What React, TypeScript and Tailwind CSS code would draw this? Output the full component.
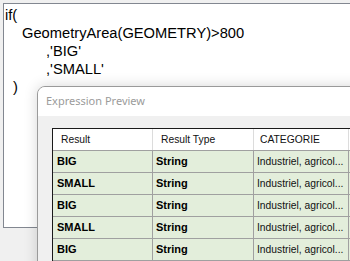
import React from "react";

const rows = [
  { r: "BIG", t: "String", c: "Industriel, agricol..." },
  { r: "SMALL", t: "String", c: "Industriel, agricol..." },
  { r: "BIG", t: "String", c: "Industriel, agricol..." },
  { r: "SMALL", t: "String", c: "Industriel, agricol..." },
  { r: "BIG", t: "String", c: "Industriel, agricol..." },
];

export default function App() {
  return (
    <div
      className="relative w-[350px] h-[261px] overflow-hidden bg-[#f0f0f0]"
      style={{ fontFamily: '"Liberation Sans", Arial, sans-serif' }}
    >
      {/* expression editor */}
      <div className="mt-[3px] ml-[3px] w-[400px] h-[225px] border border-r-0 border-[#828790] bg-white pt-[2px] pl-[1px] text-[14.7px] leading-[18px] text-black">
        <div className="whitespace-pre">if(</div>
        <div className="whitespace-pre pl-[17px]">GeometryArea(GEOMETRY)&gt;800</div>
        <div className="whitespace-pre pl-[41px]">,'BIG'</div>
        <div className="whitespace-pre pl-[41px]">,'SMALL'</div>
        <div className="whitespace-pre pl-[8px]">)</div>
      </div>

      {/* Expression Preview dialog */}
      <div className="absolute left-[37px] top-[86px] w-[400px] h-[220px] rounded-tl-[8px] border border-[#9a9a9a] bg-[#f0f0f0] shadow-[0_0_14px_rgba(0,0,0,0.16)] overflow-hidden">
        <div
          className="h-[29px] bg-white flex items-center pl-[8px] text-[11px] text-[#9b9b9b]"
          style={{ fontFamily: '"Noto Sans", "Open Sans", sans-serif' }}
        >
          Expression Preview
        </div>
        <div className="pt-[12px] pl-[14px]">
          <div className="border-t border-l border-[#1a1a1a] bg-white">
            {/* header */}
            <div className="flex h-[22px] border-b border-[#a0a0a0] bg-white text-[10.3px] text-[#111]">
              <div className="w-[100px] shrink-0 border-r border-[#dcdcdc] flex items-center pl-[8px]">Result</div>
              <div className="w-[101px] shrink-0 border-r border-[#dcdcdc] flex items-center pl-[8px]">Result Type</div>
              <div className="w-[95px] shrink-0 border-r border-[#dcdcdc] flex items-center pl-[6px]">CATEGORIE</div>
              <div className="flex-1" />
            </div>
            {rows.map((row, i) => (
              <div key={i} className="flex h-[22px] border-b border-[#a0a0a0] bg-[#e3eedb] text-black">
                <div className="w-[100px] shrink-0 border-r border-[#a0a0a0] flex items-center pl-[4px] text-[11px] font-bold">{row.r}</div>
                <div className="w-[101px] shrink-0 border-r border-[#a0a0a0] flex items-center pl-[3px] text-[11px] font-bold">{row.t}</div>
                <div className="w-[95px] shrink-0 border-r border-[#a0a0a0] flex items-center pl-[3px] text-[10.3px] text-[#111] whitespace-nowrap overflow-hidden">{row.c}</div>
                <div className="flex-1" />
              </div>
            ))}
          </div>
        </div>
      </div>
    </div>
  );
}
